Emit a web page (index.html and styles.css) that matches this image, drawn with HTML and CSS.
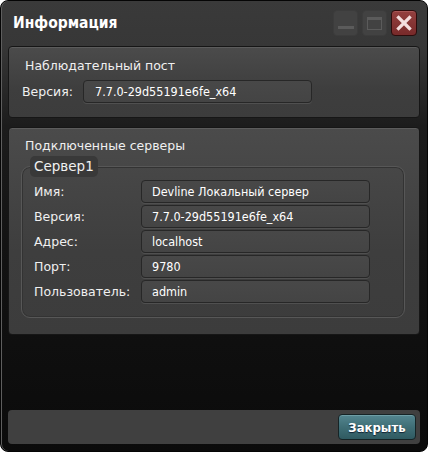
FILE: index.html
```html
<!DOCTYPE html>
<html lang="ru">
<head>
    <meta charset="UTF-8">
    <meta name="viewport" content="width=device-width, initial-scale=1.0">
    <title>Информация</title>

    <link rel="stylesheet" href="styles.css">
</head>
<body>
    <div class="window">
        <header class="titlebar">
            <h1>Информация</h1>
            <div class="win-buttons">
                <span class="wbtn">
                    <svg width="23" height="24" viewBox="0 0 23 24"><rect x="4" y="15" width="16" height="3" fill="#5b5b5b"/></svg>
                </span>
                <span class="wbtn">
                    <svg width="23" height="24" viewBox="0 0 23 24"><rect x="4.5" y="6.5" width="14" height="12" fill="none" stroke="#5b5b5b"/><rect x="4" y="6" width="15" height="3" fill="#5b5b5b"/></svg>
                </span>
                <span class="wbtn wbtn-close">
                    <svg width="24" height="24" viewBox="0 0 24 24"><path d="M6.5 6.5 L17.5 17.5 M17.5 6.5 L6.5 17.5" stroke="#f4dede" stroke-width="3.2" stroke-linecap="square"/></svg>
                </span>
            </div>
        </header>

        <!-- Observation post -->
        <section class="panel panel-post">
            <div class="panel-title">Наблюдательный пост</div>
            <div class="row">
                <span class="label">Версия:</span>
                <span class="field">7.7.0-29d55191e6fe_x64</span>
            </div>
        </section>

        <!-- Connected servers -->
        <section class="panel panel-servers">
            <div class="panel-title">Подключенные серверы</div>
            <fieldset class="group">
                <legend>Сервер1</legend>
                <div class="row"><span class="label">Имя:</span><span class="field">Devline Локальный сервер</span></div>
                <div class="row"><span class="label">Версия:</span><span class="field">7.7.0-29d55191e6fe_x64</span></div>
                <div class="row"><span class="label">Адрес:</span><span class="field">localhost</span></div>
                <div class="row"><span class="label">Порт:</span><span class="field">9780</span></div>
                <div class="row"><span class="label">Пользователь:</span><span class="field">admin</span></div>
            </fieldset>
        </section>

        <footer class="footer">
            <button class="btn-close">Закрыть</button>
        </footer>
    </div>
</body>
</html>
```

FILE: styles.css
```css
/* ======= General ======= */
body {
    margin: 0;
    padding: 0;
    background: #fff;
    font-family: "DejaVu Sans", sans-serif;
    font-size: 12.5px;
    color: #f0f0f0;
}

/* ======= Window frame ======= */
.window {
    width: 428px;
    height: 452px;
    box-sizing: border-box;
    display: flex;
    flex-direction: column;
    padding: 0 7px 7px 7px;
    border: 1px solid #050505;
    border-radius: 8px;
    background: linear-gradient(#3a3a3a 0, #373737 45px, #1c1c1c 125px, #121212 260px, #0b0b0b 100%);
    box-shadow: inset 1px 0 0 #5e5e5e;
}

.titlebar {
    height: 45px;
    display: flex;
    align-items: flex-start;
    justify-content: space-between;
    flex-shrink: 0;
}

.titlebar h1 {
    margin: 13px 0 0 5px;
    font-family: "DejaVu Sans Condensed", "DejaVu Sans", sans-serif;
    font-size: 15.5px;
    font-weight: bold;
    line-height: 18px;
    color: #fff;
}

.win-buttons {
    display: flex;
    gap: 4px;
    margin-top: 9px;
    margin-right: 3px;
}

.wbtn {
    width: 23px;
    height: 24px;
    border: 1px solid #3c3c3c;
    border-radius: 4px;
    background: #424242;
}

.wbtn svg {
    display: block;
}

.wbtn-close {
    width: 24px;
    border-color: #2c0c0c;
    background: linear-gradient(#94403f, #782a2a);
    box-shadow: inset 0 1px 0 #a85656;
}

/* ======= Panels ======= */
.panel {
    flex-shrink: 0;
    border: 1px solid #161616;
    border-radius: 4px;
    background: linear-gradient(#4b4b4b, #3e3e3e 60%, #3c3c3c);
    box-shadow: inset 0 1px 0 #5c5c5c;
}

.panel-post {
    height: 72px;
    box-sizing: border-box;
    padding: 11px 0 0 0;
}

.panel-servers {
    margin-top: 9px;
    padding: 10px 0 16px 0;
}

.panel-title {
    line-height: 16px;
    padding-left: 16px;
}

.row {
    display: flex;
    align-items: center;
    height: 23px;
}

.label {
    flex-shrink: 0;
}

.field {
    box-sizing: border-box;
    width: 229px;
    height: 23px;
    line-height: 21px;
    padding-left: 10px;
    border: 1px solid #272727;
    border-radius: 4px;
    background: linear-gradient(#484848, #444);
    box-shadow: 0 1px 0 #505050;
    font-family: "DejaVu Sans Condensed", "DejaVu Sans", sans-serif;
    color: #fff;
    white-space: nowrap;
}

.panel-post .row {
    margin-top: 6px;
    padding-left: 13px;
}

.panel-post .label {
    width: 61px;
}

.panel-post .field {
    padding-left: 11px;
}

/* ======= Server group ======= */
.group {
    margin: 2px 14px 0 12px;
    padding: 3px 0 12px 8px;
    border: 1px solid #575757;
    border-radius: 9px;
    box-shadow: inset 0 0 0 1px #333;
}

.group legend {
    padding: 0 4px;
    height: 21px;
    line-height: 21px;
    font-size: 13.5px;
    background: #393939;
    border-radius: 5px;
}

.group .row {
    padding-left: 4px;
    margin-bottom: 2px;
}

.group .label {
    width: 107px;
}

/* ======= Footer ======= */
.footer {
    margin-top: auto;
    display: flex;
    justify-content: flex-end;
    padding: 4px;
    border-radius: 4px;
    background: #404040;
}

.btn-close {
    width: 78px;
    height: 26px;
    border: 1px solid #162426;
    border-radius: 4px;
    background: linear-gradient(#548690, #3f6e76 50%, #2f5a61);
    box-shadow: inset 0 1px 0 #6e9ea6;
    font-family: "DejaVu Sans Condensed", "DejaVu Sans", sans-serif;
    font-size: 13px;
    font-weight: bold;
    color: #fff;
    text-shadow: 0 1px 1px #123;
    cursor: pointer;
}
```
